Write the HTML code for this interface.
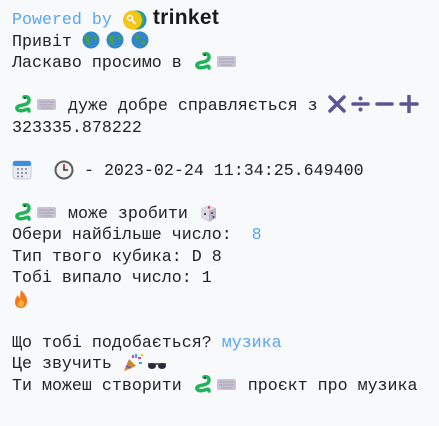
<!DOCTYPE html>
<html><head><meta charset="utf-8"><style>
html,body{margin:0;padding:0;background:#f8f9fa;width:439px;height:426px;overflow:hidden}
.c{position:absolute;left:12px;top:7px;font-family:"Liberation Mono","DejaVu Sans Mono",monospace;font-size:16.65px;line-height:21.5px;color:#222;white-space:pre}
.b{color:#5aa6f0}
.e{display:inline-block;vertical-align:-3px;height:18px}
.e svg{display:block}
.tr{font-family:"Liberation Sans",sans-serif;font-weight:bold;font-size:21px;color:#1a1a1a;letter-spacing:0.3px;margin-left:5px}
</style></head><body>
<div class="c"><span class="b">Powered by </span><span class="e" style="width:26px;vertical-align:-4px"><svg width="26" height="20" viewBox="0 0 26 20"><circle cx="15" cy="10" r="9.5" fill="#2a7fe0"/><circle cx="13" cy="10" r="9.5" fill="#3bb24a"/><circle cx="10.5" cy="10" r="9.5" fill="#f5c518"/><circle cx="8" cy="8" r="2.5" fill="none" stroke="#fff" stroke-width="1.5"/><path d="M10 10 L14 14 M12 12 L11 13" stroke="#fff" stroke-width="1.5"/></svg></span><span class="tr">trinket</span>
Привіт <span class="e" style="width:18px"><svg width="18" height="18"><circle cx="9" cy="9" r="8.5" fill="#2f86c8"/><path d="M3 5 Q7 3 8 7 Q6 10 8 14 L5 13 Q3 9 3 5Z M11 4 Q15 5 15 9 L12 8Z" fill="#4aa33a"/></svg></span><span class="e" style="width:18px;margin-left:6px"><svg width="18" height="18"><circle cx="9" cy="9" r="8.5" fill="#2f86c8"/><path d="M3 5 Q7 3 8 7 Q6 10 8 14 L5 13 Q3 9 3 5Z M11 4 Q15 5 15 9 L12 8Z" fill="#4aa33a"/></svg></span><span class="e" style="width:18px;margin-left:7px"><svg width="18" height="18"><circle cx="9" cy="9" r="8.5" fill="#2f86c8"/><path d="M4 4 Q9 3 9 8 L6 9Z M11 9 Q15 10 14 14 L11 13Z" fill="#4aa33a"/></svg></span>
Ласкаво просимо в <span class="e" style="width:24px"><svg width="22" height="18"><path d="M12 2 Q17 1 17 5 Q17 9 11 10 Q4 11 5 14 Q7 17 13 15 Q17 13 17 16" fill="none" stroke="#1fb45a" stroke-width="3.5" stroke-linecap="round"/><circle cx="13" cy="3" r="1" fill="#222"/></svg></span><span class="e" style="width:22px"><svg width="22" height="18"><rect x="1" y="4" width="19" height="11" rx="2" fill="#c9c3d3"/><path d="M3 7h15M3 10h15M5 13h11" stroke="#a8a0b5" stroke-width="1"/></svg></span>

<span class="e" style="width:24px"><svg width="22" height="18"><path d="M12 2 Q17 1 17 5 Q17 9 11 10 Q4 11 5 14 Q7 17 13 15 Q17 13 17 16" fill="none" stroke="#1fb45a" stroke-width="3.5" stroke-linecap="round"/><circle cx="13" cy="3" r="1" fill="#222"/></svg></span><span class="e" style="width:22px"><svg width="22" height="18"><rect x="1" y="4" width="19" height="11" rx="2" fill="#c9c3d3"/><path d="M3 7h15M3 10h15M5 13h11" stroke="#a8a0b5" stroke-width="1"/></svg></span> дуже добре справляється з <span class="e" style="width:92px"><svg width="92" height="18" viewBox="0 0 92 18"><g stroke="#5e5494" stroke-width="3.5" stroke-linecap="round"><path d="M2 2 L16 16 M16 2 L2 16"/><path d="M25 9 H40"/><path d="M49 9 H64"/><path d="M73 9 H89 M81 1 V17"/></g><circle cx="32.5" cy="3.5" r="2" fill="#5e5494"/><circle cx="32.5" cy="14.5" r="2" fill="#5e5494"/></svg></span>
323335.878222

<span class="e" style="width:22px"><svg width="20" height="20"><rect x="1" y="1" width="18" height="18" rx="3" fill="#e9ecf2" stroke="#c6cbd6"/><rect x="1" y="1" width="18" height="5" rx="2" fill="#3c8ee0"/><g fill="#7a8090"><circle cx="6" cy="9" r="1"/><circle cx="10" cy="9" r="1"/><circle cx="14" cy="9" r="1"/><circle cx="6" cy="13" r="1"/><circle cx="10" cy="13" r="1"/><circle cx="14" cy="13" r="1"/><circle cx="6" cy="16.5" r="1"/><circle cx="10" cy="16.5" r="1"/></g></svg></span>  <span class="e" style="width:20px"><svg width="20" height="20"><circle cx="10" cy="10" r="8.5" fill="#f3f3f3" stroke="#5c5c5c" stroke-width="2"/><path d="M10 4 V10 H14" stroke="#333" stroke-width="1.5" fill="none"/><path d="M10 4 V7" stroke="#d0305a" stroke-width="1.5"/></svg></span> - 2023-02-24 11:34:25.649400

<span class="e" style="width:24px"><svg width="22" height="18"><path d="M12 2 Q17 1 17 5 Q17 9 11 10 Q4 11 5 14 Q7 17 13 15 Q17 13 17 16" fill="none" stroke="#1fb45a" stroke-width="3.5" stroke-linecap="round"/><circle cx="13" cy="3" r="1" fill="#222"/></svg></span><span class="e" style="width:22px"><svg width="22" height="18"><rect x="1" y="4" width="19" height="11" rx="2" fill="#c9c3d3"/><path d="M3 7h15M3 10h15M5 13h11" stroke="#a8a0b5" stroke-width="1"/></svg></span> може зробити <span class="e" style="width:20px"><svg width="20" height="20"><path d="M3 5 L11 2 L18 5 L18 15 L11 19 L3 15Z" fill="#ddd9e3"/><path d="M11 8 L11 19 L18 15 L18 5Z" fill="#b9b3c4"/><circle cx="11" cy="4.5" r="1.2" fill="#e03040"/><circle cx="7" cy="11" r="1.1" fill="#444"/><circle cx="14" cy="10" r="1" fill="#444"/><circle cx="15.5" cy="14" r="1" fill="#444"/></svg></span>
Обери найбільше число:  <span class="b">8</span>
Тип твого кубика: D 8
Тобі випало число: 1
<span class="e" style="width:18px"><svg width="18" height="20"><path d="M9 1 Q16 8 15 13 Q14 19 9 19 Q3 19 3 13 Q3 9 6 6 Q7 9 8 9 Q8 5 9 1Z" fill="#f47a1f"/><path d="M9 10 Q12 13 12 15 Q11 18 9 18 Q6 18 6 15 Q7 12 9 10Z" fill="#fbb03b"/></svg></span>

Що тобі подобається? <span class="b">музика</span>
Це звучить <span class="e" style="width:24px"><svg width="22" height="20"><path d="M2 18 L7 6 L14 13Z" fill="#c98a2a"/><path d="M4 13 L9 15" stroke="#8b4fc0" stroke-width="2"/><g fill="#e2409a"><rect x="10" y="2" width="2" height="3"/><rect x="16" y="4" width="3" height="2"/></g><g fill="#3aa0e8"><rect x="13" y="1" width="2" height="4"/><rect x="17" y="9" width="3" height="2"/></g><rect x="19" y="1" width="2" height="2" fill="#f5c518"/></svg></span><span class="e" style="width:22px"><svg width="22" height="18"><path d="M2 11 H20" stroke="#333" stroke-width="1.5"/><ellipse cx="6" cy="13" rx="4" ry="3" fill="#2a2a3a"/><ellipse cx="16" cy="13" rx="4" ry="3" fill="#2a2a3a"/></svg></span>
Ти можеш створити <span class="e" style="width:24px"><svg width="22" height="18"><path d="M12 2 Q17 1 17 5 Q17 9 11 10 Q4 11 5 14 Q7 17 13 15 Q17 13 17 16" fill="none" stroke="#1fb45a" stroke-width="3.5" stroke-linecap="round"/><circle cx="13" cy="3" r="1" fill="#222"/></svg></span><span class="e" style="width:22px"><svg width="22" height="18"><rect x="1" y="4" width="19" height="11" rx="2" fill="#c9c3d3"/><path d="M3 7h15M3 10h15M5 13h11" stroke="#a8a0b5" stroke-width="1"/></svg></span> проєкт про музика</div>
</body></html>
